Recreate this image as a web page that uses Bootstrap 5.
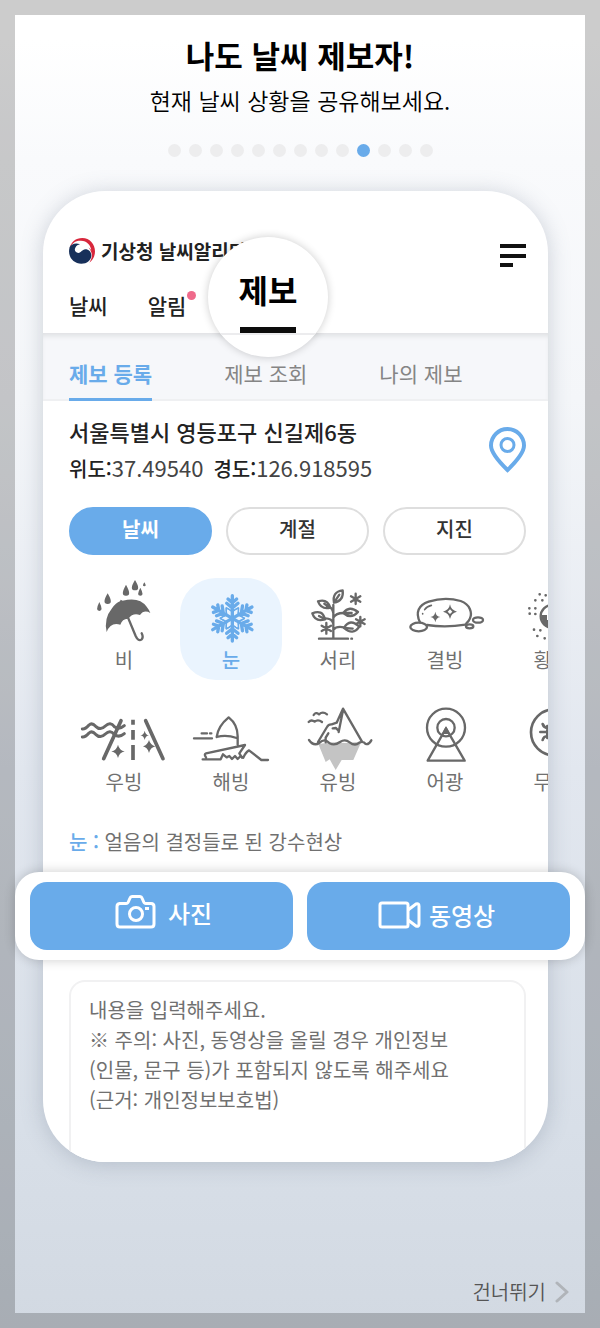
<!DOCTYPE html>
<html lang="ko">
<head>
<meta charset="utf-8">
<meta name="viewport" content="width=device-width, initial-scale=1">
<title>날씨알리미 제보</title>
<link href="https://cdn.jsdelivr.net/npm/bootstrap@5.3.0/dist/css/bootstrap.min.css" rel="stylesheet">
<style>
:root{--sky:#69abea;--ink:#222;--soft:#707070}
body{font-family:"Noto Sans CJK KR","Noto Sans",sans-serif;color:#000;word-break:keep-all}
a{text-decoration:none;color:inherit}
button{font-family:inherit}
.frame{border:15px solid rgba(0,0,0,.2);background:linear-gradient(#fff 3%,#f9fafc 12%,#f4f6f9 30%,#e2e7ef 58%,#d8dfe8 85%,#d2d9e2) border-box}
.headline{font-size:31px;font-weight:700;line-height:44px;padding-top:18px}
.subline{font-size:23px;font-weight:350;line-height:46px}
.dots{gap:8px;padding:21px 0 34px}
.dots li{width:13px;height:13px;border-radius:50%;background:#ededee}
.dots li.on{background:var(--sky)}
.phone{margin:0 37px 0 28px;background:#fff;border-radius:62px;box-shadow:0 2px 22px rgba(90,105,125,.28)}
.topbar{padding:47px 22px 0 26px;height:142px}
.brand{gap:6px;font-size:19px;font-weight:700;line-height:26px;color:var(--ink)}
.menu-btn{margin-top:6px}
.maintabs{gap:40px;font-size:21px;font-weight:500;line-height:32px;padding-top:21px;color:var(--ink)}
.alarm-dot{width:9px;height:9px;border-radius:50%;background:#ef6a8b;top:2px;right:-10px}
.lens{width:120px;height:120px;left:165px;top:46px;border-radius:50%;background:#fff;box-shadow:0 0 9px rgba(0,0,0,.2);font-size:32px;font-weight:700;line-height:44px;padding-top:30px;z-index:2;overflow:hidden}
.lens-bar{width:56px;height:6px;background:#0c0c0c;margin-top:16px}
.lens-line{height:2px;background:#ececee}
.subtabs{gap:72px;background:#f6f7fa;padding:0 26px;font-size:21px;line-height:32px;color:#858585;box-shadow:inset 0 5px 5px -2px #dfe1e3;border-bottom:2px solid #eff0f2}
.subtabs a{padding:24px 0 9px;border-bottom:3px solid transparent;margin-bottom:-2px}
.subtabs a.on{color:var(--sky);font-weight:700;border-color:var(--sky)}
.place{padding:12px 22px 0 26px;color:var(--ink)}
.place-name{font-size:22px;font-weight:500;line-height:36px}
.coords{font-size:20px;font-weight:500;line-height:36px}
.coords span{font-size:22px;font-weight:400;color:#444}
.coords span:first-child{margin-right:10px}
.pills{gap:14px;padding:20px 22px 0 26px}
.pill{height:48px;border:2px solid #dedede;border-radius:24px;background:#fff;font-size:20px;font-weight:500;color:#333;padding-bottom:5px}
.pill.on{background:var(--sky);border-color:var(--sky);color:#fff;font-weight:700}
.kinds{padding:23px 0 0 30px;gap:20px}
.kind-row{gap:5px}
.kind{flex:0 0 102px;border:0;padding:0 0 4px;background:none;border-radius:36px;font-size:20px;line-height:32px;color:var(--soft)}
.kind.on{background:#eaf4fe;color:var(--sky);font-weight:500}
.kind svg{display:block;width:102px;height:66px;overflow:visible;fill:none;stroke:#686868;stroke-width:7;stroke-linecap:round;stroke-linejoin:round}
.kind.on svg{stroke:var(--sky)}
.solid{fill:#686868;stroke:none}
.desc{font-size:20px;line-height:32px;color:var(--soft);padding:24px 26px 14px}
.desc b{color:var(--sky);font-weight:500}
.media{margin:0 -37px 0 -28px;padding:10px 15px;gap:14px;background:#fff;border-radius:24px;box-shadow:0 0 12px rgba(0,0,0,.2);z-index:1}
.media-btn{height:68px;border:0;border-radius:17px;background:var(--sky);color:#fff;font-size:24px;font-weight:500}
.memo{padding:20px 22px 0 26px;overflow:hidden;border-radius:0 0 62px 62px}
.memo textarea{display:block;height:182px;border:2px solid #f1f1f2;border-bottom:0;border-radius:16px 16px 0 0;padding:13px 18px;font-size:20px;line-height:30px;resize:none;background:#fff;overflow:hidden}
.memo textarea::placeholder{color:#707070;opacity:1}
.skip{font-size:20px;font-weight:350;line-height:32px;color:#555;padding:0 16px 5px;gap:9px}
</style>
</head>
<body>
<div class="frame min-vh-100 d-flex flex-column">
  <header class="text-center">
    <h1 class="headline m-0">나도 날씨 제보자!</h1>
    <p class="subline m-0">현재 날씨 상황을 공유해보세요.</p>
    <ul class="dots list-unstyled d-flex justify-content-center m-0">
      <li></li><li></li><li></li><li></li><li></li><li></li><li></li><li></li><li></li><li class="on"></li><li></li><li></li><li></li>
    </ul>
  </header>

  <main class="phone">
    <div class="topbar position-relative">
      <div class="d-flex justify-content-between align-items-start">
        <div class="brand d-flex align-items-center">
          <svg width="26" height="26" viewBox="0 0 78 78" aria-hidden="true"><path d="M2 30C6 12 20 0 40 0c22 0 38 18 38 40 0 15-7 27-17 34 8-11 10-25 4-36C58 22 38 10 18 18 10 21 5 25 2 30Z" fill="#d8273c"/><path d="M5 25C12 12 24 7 36 8c18 1 29 12 31 30-3-7-9-10-17-10-10 1-12 10-21 11-9-1-13-9-9-16-6-2-11-1-15 2Z" fill="#fff"/><path d="M2 27C-6 54 12 77 37 77c17 0 29-10 30-24 0-12-8-19-18-19-10 1-12 10-21 11-9-1-13-9-9-16 3-6 8-9 14-10C21 14 8 17 2 27Z" fill="#17305a"/></svg>
          <span>기상청 날씨알리미</span>
        </div>
        <button class="menu-btn btn p-0 border-0 d-flex" type="button" aria-label="메뉴"><svg width="26" height="24" viewBox="0 0 26 24" fill="#111"><path d="M0 0h26v4H0zM0 10h26v4H0zM0 19h13v4H0z"/></svg></button>
      </div>
      <nav class="maintabs d-flex">
        <a href="#">날씨</a>
        <a href="#" class="position-relative">알림<span class="alarm-dot position-absolute"></span></a>
      </nav>
      <a href="#" class="lens position-absolute d-flex flex-column align-items-center" aria-current="page">제보<span class="lens-bar"></span><span class="lens-line w-100"></span></a>
    </div>

    <nav class="subtabs d-flex">
      <a href="#" class="on">제보 등록</a><a href="#">제보 조회</a><a href="#">나의 제보</a>
    </nav>

    <section class="place d-flex justify-content-between align-items-center">
      <div>
        <div class="place-name">서울특별시 영등포구 신길제6동</div>
        <div class="coords d-flex align-items-baseline">위도:<span>37.49540</span>경도:<span>126.918595</span></div>
      </div>
      <button class="btn p-0 border-0 d-flex" type="button" aria-label="위치"><svg width="37" height="46" viewBox="0 0 37 46" fill="none" stroke="#69abea" stroke-width="4"><path d="M18.500 43Q2 27 2 18.500a16.500 16.500 0 0 1 33 0Q35 27 18.500 43Z"/><circle cx="18.500" cy="18" r="6.500" stroke-width="3"/></svg></button>
    </section>

    <div class="pills d-flex">
      <button class="pill on flex-fill" type="button">날씨</button>
      <button class="pill flex-fill" type="button">계절</button>
      <button class="pill flex-fill" type="button">지진</button>
    </div>

    <section class="kinds d-flex flex-column overflow-hidden">
      <div class="kind-row d-flex">
        <button class="kind" type="button">
          <svg viewBox="39 27 306 198"><path class="solid" d="M140 189Q131 148 155 119Q168 101 180 97l2-5 6 3Q238 82 260 113Q268 123 271 132Q252 121 240 138Q219 130 205 149Q187 148 181 167Q152 158 140 189Z"/><path d="M205 148l22 53q8 18 18 10 6-6 0-18"/><path class="solid" d="M118 99q-13 26 0 27 13-1 0-27ZM143 73q-19 32 0 32 19 0 0-32ZM198 47q-19 34 0 33 19 1 0-33ZM225 33q-19 31 0 31 19 0 0-31ZM241 56q-13 24 0 24 13 0 0-24ZM253 40q-8 12 0 12 8 0 0-12Z"/></svg>비
        </button>
        <button class="kind on" type="button">
          <svg viewBox="360 27 306 198">
            <defs><g id="arm"><path stroke-width="10" d="M517 148V80M517 101l-13-11M517 101l13-11M517 117l-17-14M517 117l17-14"/><path stroke-width="4" d="M517 129l-10-8-9-4 1 14M517 129l10-8 9-4-1 14"/></g></defs>
            <use href="#arm"/><use href="#arm" transform="rotate(60 517 148)"/><use href="#arm" transform="rotate(120 517 148)"/><use href="#arm" transform="rotate(180 517 148)"/><use href="#arm" transform="rotate(240 517 148)"/><use href="#arm" transform="rotate(300 517 148)"/>
          </svg>눈
        </button>
        <button class="kind" type="button">
          <svg viewBox="-9 27 306 198"><g stroke-width="7"><path d="M130 208V108M130 132Q126 113 111 113M130 164Q126 148 106 148M130 146Q138 132 160 132M130 182Q140 170 162 175M87 209h87M184 209h2"/><path d="M132 101Q126 68 158 64Q162 95 132 101l16-24M121 116Q94 123 84 97Q112 88 121 116l-18-12M105 151Q76 160 67 133Q97 120 105 151l-18-10M160 132Q178 108 204 129Q183 152 160 132h25M162 177Q180 146 208 173Q189 201 162 177l26 2"/><path d="M197 74v31M183 82l28 16M183 98l28-16M211 144v28M198 151l26 14M198 165l26-14M109 162v32M95 170l28 16M95 186l28-16"/></g></svg>서리
        </button>
        <button class="kind" type="button">
          <svg viewBox="312 27 306 198"><path d="M390 160C375 130 386 108 416 98Q465 82 512 96C541 106 547 132 540 148Q537 156 529 163M411 168Q466 177 526 167"/><ellipse cx="386" cy="174" rx="25" ry="13"/><ellipse cx="539" cy="172" rx="11" ry="6"/><ellipse cx="564" cy="153" rx="15" ry="8"/><path stroke-width="5" d="M404 122q6-10 20-13M398 134v1"/><path class="solid" d="M436 128q2 14 15 16-13 2-15 16-2-14-15-16 13-2 15-16Z"/><path fill-rule="evenodd" class="solid" d="M480 106q3 18 21 22-18 4-21 22-3-18-21-22 18-4 21-22Zm0 15-7 7 7 7 7-7Z"/></svg>결빙
        </button>
        <button class="kind" type="button">
          <svg viewBox="633 27 306 198"><circle cx="786" cy="142" r="34"/><path class="solid" d="M753 138h18v15h15v30q-28-7-33-45Z"/><path stroke-width="8" d="M749 76h.1M767 79h.1M736 94h.1M757 94h.1M718 118h.1M736 118h.1M719 134h.1M736 135h.1M732 182h.1M751 184h.1M742 201h.1M764 208h.1M785 79h.1"/></svg>황사
        </button>
      </div>
      <div class="kind-row d-flex">
        <button class="kind" type="button">
          <svg viewBox="39 18 306 198"><g stroke-width="9"><path d="M67 105Q76 106 87 93Q96 85 107 97Q121 111 136 96Q151 82 163 98Q178 108 193 95M67 129Q76 130 87 117Q96 109 107 121Q121 135 136 120Q151 106 163 122Q178 132 193 119"/><path stroke-width="11" d="M183 80l-52 114M257 80l52 114"/><path stroke-width="11" stroke-linecap="butt" d="M219 77v15M219 108v29M219 153v45"/></g><path class="solid" d="M174 152q4 17 20 20-16 4-20 20-4-16-20-20 16-3 20-20ZM254 110q2 12 13 14-11 2-13 14-2-12-13-14 11-2 13-14ZM267 138q4 15 19 19-15 4-19 20-4-16-18-20 14-4 18-19Z"/></svg>우빙
        </button>
        <button class="kind" type="button">
          <svg viewBox="360 18 306 198"><path d="M470 129Q474 96 506 70Q533 91 533 127V152M470 129Q499 121 530 132M402 133h54M425 118h16M450 118h4M428 196h54l7-15 11 9 8-4 8 9 9-9 8 9 9-9 8 5q7-17 17-22l37 29h20M438 190q-7-10 0-12l117-25-17 25 8 13"/></svg>해빙
        </button>
        <button class="kind" type="button">
          <svg viewBox="-9 18 306 198"><path fill="#c4c4c4" stroke="none" d="M85 150l44-5 36 2 49-4-24 55h-35l-18 30-18-32-12 8Z"/><path d="M57 138q14 20 31 9 16-16 31 1 15 8 31-4 15-10 29 1 16 13 29 1 12-6 19 4 9 3 17-11M84 144l27-45q5-9 14-8l15-5 19-42 57 99M159 49l-13 65M146 111l-8-9-10 1M115 118l-8 13v14M71 63q6-10 16-2 11-10 24 0M56 84q8-9 18-1 10-8 22 1"/></svg>유빙
        </button>
        <button class="kind" type="button">
          <svg viewBox="312 18 306 198"><circle cx="468" cy="101" r="57"/><circle cx="468" cy="101" r="26"/><path d="M468 103l-55 97h111Z"/><path class="solid" d="M468 96l-12 24h24Z"/></svg>어광
        </button>
        <button class="kind" type="button">
          <svg viewBox="633 18 306 198"><circle cx="792" cy="115" r="69" stroke-width="8"/><path stroke-width="8" d="M751 114h36M758 90q4 13 20 12M758 138q3-13 20-12M772 96v36"/></svg>무빙
        </button>
      </div>
    </section>

    <p class="desc m-0"><b>눈 :</b> 얼음의 결정들로 된 강수현상</p>

    <div class="media d-flex position-relative">
      <button class="media-btn w-50 d-flex align-items-center justify-content-center gap-2 ps-2 pe-1 pb-2" type="button">
        <svg width="45" height="36" viewBox="0 0 45 36" fill="none" stroke="#fff" stroke-width="3" stroke-linejoin="round"><path d="M4 8.500h7q2 0 2.500-2L15 3q.5-1.500 2-1.500h8q1.500 0 2 1.500l1.500 3.500q.5 2 2.500 2h5q3 0 3 3V29q0 3-3 3H5q-3 0-3-3V11.500q0-3 3-3"/><circle cx="21" cy="19" r="6.500"/><path d="M30 13.500h4"/></svg>사진
      </button>
      <button class="media-btn w-50 d-flex align-items-center justify-content-center gap-2 ps-1 pe-2 pb-1" type="button">
        <svg width="43" height="28" viewBox="0 0 43 28" fill="none" stroke="#fff" stroke-width="3" stroke-linejoin="round"><rect x="2" y="2" width="28" height="24" rx="2"/><path d="M30 9l8-6q3-1 3 2v18q0 3-3 2l-8-6"/></svg>동영상
      </button>
    </div>

    <div class="memo">
      <textarea class="w-100" aria-label="제보 내용" placeholder="내용을 입력해주세요.&#10;※ 주의: 사진, 동영상을 올릴 경우 개인정보&#10;(인물, 문구 등)가 포함되지 않도록 해주세요&#10;(근거: 개인정보보호법)"></textarea>
    </div>
  </main>

  <a href="#" class="skip mt-auto ms-auto d-flex align-items-center">건너뛰기
    <svg width="14" height="22" viewBox="0 0 14 22" fill="none" stroke="#b0b4b9" stroke-width="3" stroke-linecap="round" stroke-linejoin="round" aria-hidden="true"><path d="M2 2l10 9-10 9"/></svg>
  </a>
</div>
<script src="https://cdn.jsdelivr.net/npm/bootstrap@5.3.0/dist/js/bootstrap.bundle.min.js"></script>
</body>
</html>
